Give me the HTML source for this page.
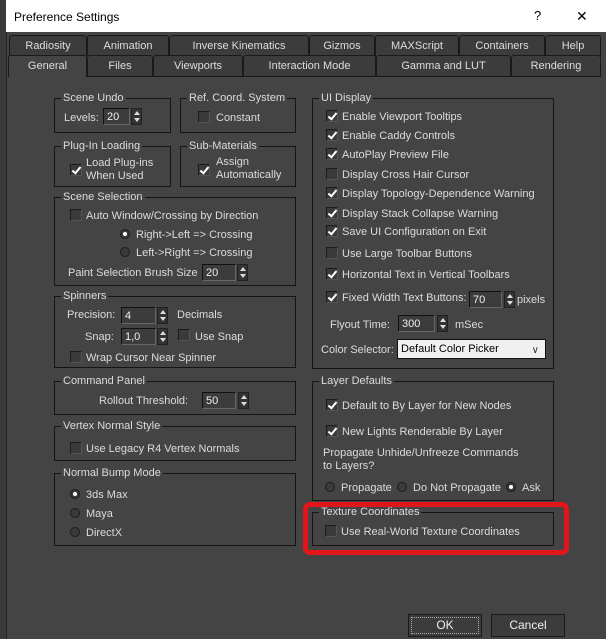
<!DOCTYPE html>
<html><head><meta charset="utf-8"><style>
*{margin:0;padding:0;box-sizing:border-box}
body{width:606px;height:639px;background:#3a3a3a;font-family:"Liberation Sans",sans-serif;font-size:11px;color:#dcdcdc;position:relative;overflow:hidden}
.a{position:absolute;white-space:nowrap}
span.a{margin-top:1px}
#win{position:absolute;left:6px;top:0;width:600px;height:639px;background:#444;border-left:1px solid #222}
#title{position:absolute;left:6px;top:0;width:600px;height:32px;background:#fff;color:#000;font-size:12px}
.tab{position:absolute;height:21px;background:#3c3c3c;border:1px solid #1a1a1a;border-bottom:none;border-radius:3px 3px 0 0;text-align:center;line-height:21px;color:#ddd;font-size:11px}
.sel{background:#444}
.g{position:absolute;border:1px solid #151515}
.lg{position:absolute;top:-8px;left:6px;background:#444;padding:0 2px;line-height:14px}
.cb{position:absolute;width:12px;height:12px;background:#3a3a3a;border:1px solid #1c1c1c;border-right-color:#555;border-bottom-color:#555}
.cb.c::after{content:"";position:absolute;left:3px;top:0px;width:3px;height:7px;border:solid #fff;border-width:0 2px 2px 0;transform:rotate(40deg)}
.rd{position:absolute;width:10px;height:10px;border-radius:50%;background:#3a3a3a;border:1px solid #1c1c1c}
.rd.c::after{content:"";position:absolute;left:2px;top:2px;width:4px;height:4px;border-radius:50%;background:#fff}
.sp{position:absolute;height:17px;background:#3c3c3c;border:1px solid #111;border-right-color:#666;border-bottom-color:#666;padding-left:3px;line-height:16px;color:#eee}
.ar{position:absolute;width:11px;height:17px;background:#333;border:1px solid #222}
.ar::before{content:"";position:absolute;left:2px;top:2px;border:3px solid transparent;border-bottom:4px solid #ddd;border-top:none}
.ar::after{content:"";position:absolute;left:2px;bottom:2px;border:3px solid transparent;border-top:4px solid #ddd;border-bottom:none}
.btn{position:absolute;height:23px;background:#3c3c3c;border:1px solid #1a1a1a;text-align:center;line-height:21px;font-size:12px;color:#eee}
</style></head><body>
<div id="win"></div>
<div id="title"><span class="a" style="left:8px;top:9px">Preference Settings</span><span class="a" style="left:528px;top:7px;font-size:13px">?</span><span class="a" style="left:570px;top:7px;font-size:14px">✕</span></div>

<div class="tab" style="left:9px;top:35px;width:78px">Radiosity</div>
<div class="tab" style="left:87px;top:35px;width:82px">Animation</div>
<div class="tab" style="left:169px;top:35px;width:140px">Inverse Kinematics</div>
<div class="tab" style="left:309px;top:35px;width:66px">Gizmos</div>
<div class="tab" style="left:375px;top:35px;width:84px">MAXScript</div>
<div class="tab" style="left:459px;top:35px;width:86px">Containers</div>
<div class="tab" style="left:545px;top:35px;width:56px">Help</div>
<div class="tab sel" style="left:8px;top:55px;width:79px;height:22px;border-color:#1a1a1a">General</div>
<div class="tab" style="left:87px;top:55px;width:66px">Files</div>
<div class="tab" style="left:153px;top:55px;width:90px">Viewports</div>
<div class="tab" style="left:243px;top:55px;width:133px">Interaction Mode</div>
<div class="tab" style="left:376px;top:55px;width:135px">Gamma and LUT</div>
<div class="tab" style="left:511px;top:55px;width:90px">Rendering</div>
<div class="a" style="left:87px;top:76px;width:514px;height:1px;background:#1a1a1a"></div>

<div class="g" style="left:54px;top:98px;width:117px;height:35px"><span class="lg">Scene Undo</span></div>
<span class="a" style="left:64px;top:111px">Levels:</span><div class="sp" style="left:103px;top:108px;width:27px">20</div><div class="ar" style="left:131px;top:108px"></div>

<div class="g" style="left:180px;top:98px;width:116px;height:35px"><span class="lg">Ref. Coord. System</span></div>
<div class="cb" style="left:198px;top:111px"></div><span class="a" style="left:216px;top:111px">Constant</span>

<div class="g" style="left:54px;top:146px;width:117px;height:41px"><span class="lg">Plug-In Loading</span></div>
<div class="cb c" style="left:70px;top:164px"></div><span class="a" style="left:86px;top:156px;line-height:13px">Load Plug-ins<br>When Used</span>

<div class="g" style="left:180px;top:146px;width:116px;height:41px"><span class="lg">Sub-Materials</span></div>
<div class="cb c" style="left:198px;top:164px"></div><span class="a" style="left:216px;top:155px;line-height:13px">Assign<br>Automatically</span>

<div class="g" style="left:54px;top:197px;width:242px;height:89px"><span class="lg">Scene Selection</span></div>
<div class="cb" style="left:70px;top:209px"></div><span class="a" style="left:86px;top:209px">Auto Window/Crossing by Direction</span>
<div class="rd c" style="left:120px;top:229px"></div><span class="a" style="left:136px;top:228px">Right-&gt;Left =&gt; Crossing</span>
<div class="rd" style="left:120px;top:247px"></div><span class="a" style="left:136px;top:246px">Left-&gt;Right =&gt; Crossing</span>
<span class="a" style="left:68px;top:266px">Paint Selection Brush Size</span><div class="sp" style="left:202px;top:264px;width:34px">20</div><div class="ar" style="left:237px;top:264px"></div>

<div class="g" style="left:54px;top:296px;width:242px;height:72px"><span class="lg">Spinners</span></div>
<span class="a" style="left:67px;top:308px">Precision:</span><div class="sp" style="left:121px;top:307px;width:35px">4</div><div class="ar" style="left:157px;top:307px"></div><span class="a" style="left:177px;top:308px">Decimals</span>
<span class="a" style="left:85px;top:330px">Snap:</span><div class="sp" style="left:121px;top:328px;width:35px">1,0</div><div class="ar" style="left:157px;top:328px"></div>
<div class="cb" style="left:178px;top:329px"></div><span class="a" style="left:195px;top:330px">Use Snap</span>
<div class="cb" style="left:70px;top:351px"></div><span class="a" style="left:86px;top:351px">Wrap Cursor Near Spinner</span>

<div class="g" style="left:54px;top:381px;width:242px;height:34px"><span class="lg">Command Panel</span></div>
<span class="a" style="left:99px;top:394px">Rollout Threshold:</span><div class="sp" style="left:202px;top:392px;width:34px">50</div><div class="ar" style="left:238px;top:392px"></div>

<div class="g" style="left:54px;top:426px;width:242px;height:35px"><span class="lg">Vertex Normal Style</span></div>
<div class="cb" style="left:70px;top:442px"></div><span class="a" style="left:86px;top:442px">Use Legacy R4 Vertex Normals</span>

<div class="g" style="left:54px;top:473px;width:242px;height:73px"><span class="lg">Normal Bump Mode</span></div>
<div class="rd c" style="left:70px;top:489px"></div><span class="a" style="left:86px;top:488px">3ds Max</span>
<div class="rd" style="left:70px;top:508px"></div><span class="a" style="left:86px;top:507px">Maya</span>
<div class="rd" style="left:70px;top:527px"></div><span class="a" style="left:86px;top:526px">DirectX</span>

<div class="g" style="left:312px;top:98px;width:242px;height:271px"><span class="lg">UI Display</span></div>
<div class="cb c" style="left:326px;top:110px"></div><span class="a" style="left:342px;top:110px">Enable Viewport Tooltips</span>
<div class="cb c" style="left:326px;top:129px"></div><span class="a" style="left:342px;top:129px">Enable Caddy Controls</span>
<div class="cb c" style="left:326px;top:148px"></div><span class="a" style="left:342px;top:148px">AutoPlay Preview File</span>
<div class="cb" style="left:326px;top:168px"></div><span class="a" style="left:342px;top:168px">Display Cross Hair Cursor</span>
<div class="cb c" style="left:326px;top:187px"></div><span class="a" style="left:342px;top:187px">Display Topology-Dependence Warning</span>
<div class="cb c" style="left:326px;top:207px"></div><span class="a" style="left:342px;top:207px">Display Stack Collapse Warning</span>
<div class="cb c" style="left:326px;top:225px"></div><span class="a" style="left:342px;top:225px">Save UI Configuration on Exit</span>
<div class="cb" style="left:326px;top:247px"></div><span class="a" style="left:342px;top:247px">Use Large Toolbar Buttons</span>
<div class="cb c" style="left:326px;top:268px"></div><span class="a" style="left:342px;top:268px">Horizontal Text in Vertical Toolbars</span>
<div class="cb c" style="left:326px;top:291px"></div><span class="a" style="left:342px;top:291px">Fixed Width Text Buttons:</span><div class="sp" style="left:469px;top:291px;width:33px">70</div><div class="ar" style="left:504px;top:291px"></div><span class="a" style="left:517px;top:293px">pixels</span>
<span class="a" style="left:330px;top:318px">Flyout Time:</span><div class="sp" style="left:398px;top:315px;width:37px">300</div><div class="ar" style="left:437px;top:315px"></div><span class="a" style="left:455px;top:318px">mSec</span>
<span class="a" style="left:321px;top:343px">Color Selector:</span>
<div class="a" style="left:397px;top:339px;width:149px;height:20px;background:#f0f0f0;border:1px solid #111;color:#000;padding-left:3px;line-height:19px">Default Color Picker<span class="a" style="right:6px;top:0;font-size:10px;color:#333">∨</span></div>

<div class="g" style="left:312px;top:381px;width:242px;height:120px"><span class="lg">Layer Defaults</span></div>
<div class="cb c" style="left:326px;top:399px"></div><span class="a" style="left:342px;top:399px">Default to By Layer for New Nodes</span>
<div class="cb c" style="left:326px;top:425px"></div><span class="a" style="left:342px;top:425px">New Lights Renderable By Layer</span>
<span class="a" style="left:323px;top:446px">Propagate Unhide/Unfreeze Commands</span>
<span class="a" style="left:323px;top:459px">to Layers?</span>
<div class="rd" style="left:325px;top:482px"></div><span class="a" style="left:341px;top:481px">Propagate</span>
<div class="rd" style="left:397px;top:482px"></div><span class="a" style="left:413px;top:481px">Do Not Propagate</span>
<div class="rd c" style="left:506px;top:482px"></div><span class="a" style="left:522px;top:481px">Ask</span>

<div class="g" style="left:312px;top:512px;width:242px;height:34px"><span class="lg">Texture Coordinates</span></div>
<div class="cb" style="left:325px;top:525px"></div><span class="a" style="left:341px;top:525px">Use Real-World Texture Coordinates</span>
<div class="a" style="left:303px;top:502px;width:266px;height:53px;border:5px solid #e2151b;border-radius:7px"></div>

<div class="btn" style="left:408px;top:614px;width:74px;outline:1px dotted #aaa;outline-offset:-4px">OK</div>
<div class="btn" style="left:491px;top:614px;width:74px">Cancel</div>
</body></html>
